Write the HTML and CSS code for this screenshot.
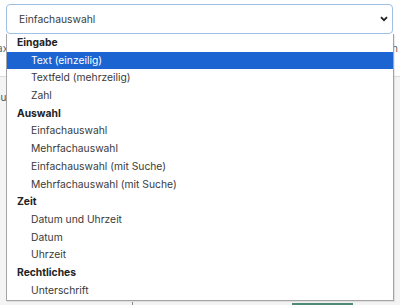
FILE: index.html
```html
<!DOCTYPE html>
<html lang="de">
<head>
    <meta charset="UTF-8">
    <meta name="viewport" content="width=device-width, initial-scale=1.0">
    <title>Feldtyp</title>
    <link rel="stylesheet" href="styles.css">
</head>
<body>
    <div class="page">
        <div class="field-panel">
            <div class="select-box">
                <span class="select-value">Einfachauswahl</span>
                <svg class="select-arrow" width="8" height="6" viewBox="0 0 8 6">
                    <path d="M1 1.2 L4 4.2 L7 1.2" fill="none" stroke="#222" stroke-width="1.8"/>
                </svg>
            </div>
            <div class="hint-row">
                <span class="hint-left">Max</span>
                <span class="hint-right">h</span>
            </div>
            <div class="hint-row second">
                <span class="hint-left">"r</span>
            </div>
        </div>
        <div class="lower-panel">
            <div class="lower-row">
                <span class="hint-left">Suche</span>
            </div>
            <div class="lower-footer">
                <span class="footer-tick"></span>
                <span class="footer-button"></span>
            </div>
        </div>
    </div>

    <div class="dropdown">
        <div class="group">Eingabe</div>
        <div class="option selected">Text (einzeilig)</div>
        <div class="option">Textfeld (mehrzeilig)</div>
        <div class="option">Zahl</div>
        <div class="group">Auswahl</div>
        <div class="option">Einfachauswahl</div>
        <div class="option">Mehrfachauswahl</div>
        <div class="option">Einfachauswahl (mit Suche)</div>
        <div class="option">Mehrfachauswahl (mit Suche)</div>
        <div class="group">Zeit</div>
        <div class="option">Datum und Uhrzeit</div>
        <div class="option">Datum</div>
        <div class="option">Uhrzeit</div>
        <div class="group">Rechtliches</div>
        <div class="option">Unterschrift</div>
    </div>
</body>
</html>
```
FILE: styles.css
```css
* {
    margin: 0;
    padding: 0;
    box-sizing: border-box;
    font-family: Inter, "Noto Sans", sans-serif;
}

body {
    width: 400px;
    height: 305px;
    overflow: hidden;
    background: #f4f4f4;
    font-size: 10.3px;
    color: #333;
}

.page {
    height: 305px;
    display: flex;
    flex-direction: column;
}

.field-panel {
    height: 77px;
    background: #fff;
    padding-top: 4px;
    border-bottom: 1px solid #dcdcdc;
    overflow: hidden;
}

.select-box {
    margin: 0 7px 0 6px;
    height: 30px;
    border: 1px solid #9fc0e6;
    border-radius: 4px;
    display: flex;
    align-items: center;
    justify-content: space-between;
    padding: 0 4px 0 12px;
    background: #fff;
}

.select-value {
    color: #3a3a3a;
}

.hint-row {
    display: flex;
    justify-content: space-between;
    margin-top: 9px;
    line-height: 11px;
    font-size: 10px;
    color: #666;
}

.hint-row.second {
    margin-top: 0;
}

.hint-left {
    margin-left: -12px;
}

.hint-right {
    margin-right: 2px;
}

.lower-panel {
    flex: 1;
    display: flex;
    flex-direction: column;
    justify-content: space-between;
}

.lower-row {
    margin-top: 14px;
    font-size: 10px;
    color: #555;
}

.lower-row .hint-left {
    margin-left: -6px;
}

.lower-footer {
    height: 3px;
    display: flex;
    align-items: flex-end;
    padding-left: 132px;
}

.footer-tick {
    width: 1px;
    height: 3px;
    background: #888;
}

.footer-button {
    margin-left: 159px;
    width: 61px;
    height: 2px;
    background: #4f8a78;
}

.dropdown {
    position: absolute;
    top: 34px;
    left: 6px;
    width: 388px;
    height: 267px;
    background: #fff;
    border: 1px solid #a4a4a4;
    border-top: none;
    box-shadow: 1px 1px 1px rgba(0, 0, 0, 0.08);
}

.group,
.option {
    height: 17.7px;
    line-height: 17.7px;
    white-space: nowrap;
}

.group {
    padding-left: 10px;
    font-weight: 700;
    color: #222;
}

.option {
    padding-left: 24px;
    color: #3a3a3a;
}

.option.selected {
    background: #1b64d2;
    color: #fff;
}
```
